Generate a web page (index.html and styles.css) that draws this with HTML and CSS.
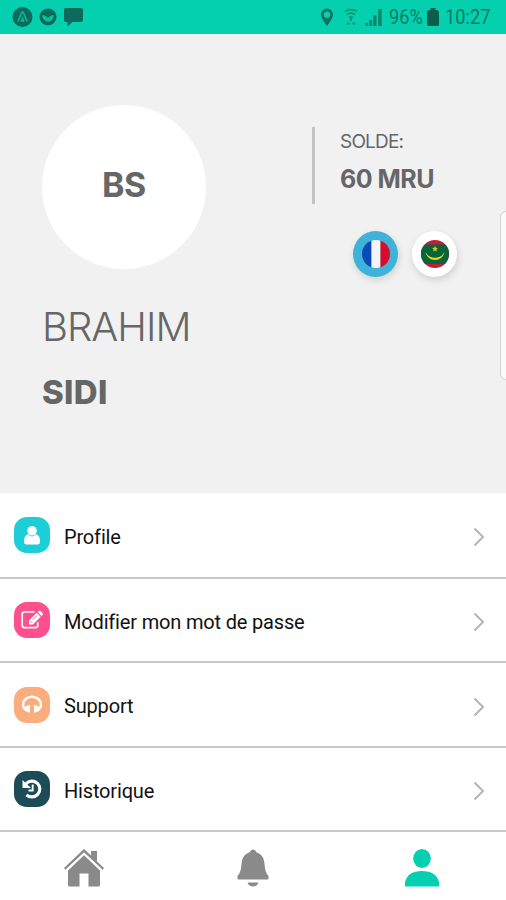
FILE: index.html
```html
<!DOCTYPE html>
<html lang="fr">
<head>
    <meta charset="UTF-8">
    <title>Profile</title>
    <meta name="viewport" content="width=device-width, initial-scale=1.0">
    <link rel="stylesheet" href="styles.css">
</head>
<body>
<div class="app">
    <div class="status-bar">
        <svg class="status-notif" width="72" height="24" viewBox="0 0 72 24">
            <circle cx="10.5" cy="12" r="10" fill="#0c6b5c"/>
            <path d="M6 16.500 9.400 8Q10.500 5.500 11.600 8L15 16.500M9.200 17 10.500 13.500 11.800 17" fill="none" stroke="#08b894" stroke-width="1.700"/>
            <circle cx="36" cy="12" r="8.5" fill="#0c6b5c"/>
            <path d="M30 10.500Q33 9.500 36 13Q39 9.500 42 10.500Q40.500 16.500 36 16.500Q31.500 16.500 30 10.500Z" fill="#06c3a0"/>
            <path d="M54 3h15q2 0 2 2v10q0 2-2 2h-8.500l-5 4.500v-4.500h-1.500q-2 0-2-2v-10q0-2 2-2Z" fill="#0c6b5c"/>
        </svg>
        <svg class="status-signal" width="66" height="24" viewBox="0 0 66 24">
            <path fill-rule="evenodd" d="M7 3.500a6 6 0 0 1 6 6c0 4-6 11.500-6 11.500s-6-7.500-6-11.500a6 6 0 0 1 6-6Zm0 3a3.200 3.200 0 1 0 0 6.400 3.200 3.200 0 0 0 0-6.400Z" fill="#0b7564"/>
            <path d="M25 6.500Q31 2.500 37 6.500M27 9.500Q31 6.800 35 9.500M29 12.500Q31 11 33 12.500M31 13v3" fill="none" stroke="#0b8f78" stroke-width="1.700"/>
            <path d="M27 18.500h2.500M32.500 18.500h2.500" stroke="#0b8f78" stroke-width="2"/>
            <path d="M45.500 18h2.600v3h-2.600zM49.200 15h2.900v6h-2.900zM53.200 10.500h3.300v10.500h-3.300zM58.200 4h3.500v17h-3.500z" fill="#0b8571"/>
        </svg>
        <span class="status-text battery-level">96%</span>
        <svg class="battery" width="12" height="18" viewBox="0 0 12 18">
            <path d="M3.500 0h5v2h1.500l2 1.500v13q0 1.500-1.500 1.500h-9q-1.500 0-1.500-1.500v-13l2-1.500h1.500z" fill="#0c5d4c"/>
        </svg>
        <span class="status-text clock">10:27</span>
    </div>

    <div class="header">
        <div class="user">
            <div class="avatar">BS</div>
            <div class="first-name">BRAHIM</div>
            <div class="last-name">SIDI</div>
        </div>
        <div class="account">
            <div class="balance">
                <div class="balance-label">SOLDE:</div>
                <div class="balance-value">60 MRU</div>
            </div>
            <div class="languages">
                <div class="lang lang-active">
                    <svg width="28" height="28" viewBox="0 0 28 28">
                        <clipPath id="fr"><circle cx="14" cy="14" r="14"/></clipPath>
                        <g clip-path="url(#fr)">
                            <path d="M0 0h9.500v28H0z" fill="#0a4bb5"/>
                            <path d="M9.500 0h9v28h-9z" fill="#f5f5f7"/>
                            <path d="M18.500 0H28v28h-9.500z" fill="#dc0b2b"/>
                        </g>
                    </svg>
                </div>
                <div class="lang">
                    <svg width="28" height="28" viewBox="0 0 28 28">
                        <clipPath id="mr"><circle cx="14" cy="14" r="14"/></clipPath>
                        <g clip-path="url(#mr)">
                            <path d="M0 0h28v28H0z" fill="#c21f37"/>
                            <path d="M0 4.500h28v19.500H0z" fill="#08643a"/>
                            <path d="M4.500 12a9.600 9.200 0 0 0 19 0Q20.500 17.800 14 17.800T4.500 12Z" fill="#e6d91b"/>
                            <path d="m14 6 .9 1.800 2 .3-1.500 1.400.4 2-1.800-.9-1.800.9.400-2-1.500-1.400 2-.3z" fill="#d2cb1c"/>
                        </g>
                    </svg>
                </div>
            </div>
        </div>
        <div class="edge-panel"></div>
    </div>

    <div class="menu">
        <div class="menu-item">
            <div class="menu-icon cyan">
                <svg width="36" height="36" viewBox="0 0 36 36" fill="#fff">
                    <circle cx="18" cy="13.800" r="4.800"/>
                    <path d="M13.600 17.300Q18 21.500 22.400 17.300 26 18.700 26 24.500 26 27.500 23.500 27.500h-11Q10 27.500 10 24.500 10 18.700 13.600 17.300Z"/>
                </svg>
            </div>
            <span class="menu-label">Profile</span>
            <svg class="chevron" width="12" height="20" viewBox="0 0 12 20"><path d="M1.500 1.500 10 10l-8.500 8.500"/></svg>
        </div>
        <div class="menu-item">
            <div class="menu-icon pink">
                <svg width="36" height="36" viewBox="0 0 36 36">
                    <path d="M20.500 10H10.500q-2.300 0-2.300 2.300v11q0 2.300 2.300 2.300h11q2.300 0 2.300-2.300v-3" fill="none" stroke="#fff" stroke-width="1.700"/>
                    <path d="m15 18.500 7.700-7.700 4 4-7.700 7.700h-4zM23.600 9.900l1-1q1-.8 2 .1l1.900 1.900q.8 1 0 2l-1 1z" fill="#fff"/>
                    <path d="m16.500 19.200 1.700 1.700M18.800 17.700l4.300-4.300" stroke="#ff4f8c" stroke-width=".9"/>
                </svg>
            </div>
            <span class="menu-label">Modifier mon mot de passe</span>
            <svg class="chevron" width="12" height="20" viewBox="0 0 12 20"><path d="M1.500 1.500 10 10l-8.500 8.500"/></svg>
        </div>
        <div class="menu-item">
            <div class="menu-icon orange">
                <svg width="36" height="36" viewBox="0 0 36 36">
                    <path d="M11.500 22.500Q9 20.500 9 17.500a9 7.800 0 0 1 18 0Q27 20.500 24.500 22.500" fill="none" stroke="#fff" stroke-width="2.500"/>
                    <path d="M16 18v7.500h-1.500q-1 0-1.500-.8-3-.5-3-2.900t3-2.800q.5-1 1.500-1ZM20 18v7.500h1.500q1 0 1.500-.8 3-.5 3-2.900t-3-2.800q-.5-1-1.500-1Z" fill="#fff"/>
                </svg>
            </div>
            <span class="menu-label">Support</span>
            <svg class="chevron" width="12" height="20" viewBox="0 0 12 20"><path d="M1.500 1.500 10 10l-8.500 8.500"/></svg>
        </div>
        <div class="menu-item">
            <div class="menu-icon dark">
                <svg width="36" height="36" viewBox="0 0 36 36">
                    <path d="M12 12.800a7.900 7.900 0 1 1 .5 11" fill="none" stroke="#fff" stroke-width="3.200"/>
                    <path d="M8.500 9 17 17H8.500z" fill="#fff"/>
                    <path d="M18.700 13.500v6h-4.200" fill="none" stroke="#fff" stroke-width="1.900"/>
                </svg>
            </div>
            <span class="menu-label">Historique</span>
            <svg class="chevron" width="12" height="20" viewBox="0 0 12 20"><path d="M1.500 1.500 10 10l-8.500 8.500"/></svg>
        </div>
    </div>

    <div class="tab-bar">
        <div class="tab">
            <svg width="40" height="38" viewBox="0 0 40 38" fill="#8a8a8a">
                <path d="M20 6.300 36 21.500V36q0 1.500-1.500 1.500H24.500v-13h-9v13H5.500Q4 37.500 4 36V21.500Z"/>
                <path d="M20 0 27 6.500V2h6v10.500l7 6.500-1.300 1.700L20 3.300 1.300 20.700 0 19Z"/>
            </svg>
        </div>
        <div class="tab">
            <svg width="32" height="38" viewBox="0 0 32 38" fill="#8a8a8a">
                <path d="M16 .5q2.500 0 3 2.500 8 2.500 8.500 11.500.3 9 4 12.500v2.500q0 1-1 1h-29q-1 0-1-1V27q3.700-3.500 4-12.500Q5 5.500 13 3q.5-2.500 3-2.500Z"/>
                <path d="M10.500 33.500h11q-1.500 4-5.500 4t-5.500-4Z"/>
            </svg>
        </div>
        <div class="tab">
            <svg width="34" height="38" viewBox="0 0 34 38" fill="#04cfae">
                <ellipse cx="17" cy="9.500" rx="8.800" ry="9.500"/>
                <path d="M0 37.500V33Q3 22 17 22T34 33v4.500Z"/>
            </svg>
        </div>
    </div>
</div>
</body>
</html>
```
FILE: styles.css
```css
body {
    margin: 0px;
    font-family: Roboto, "Liberation Sans", sans-serif;
    background-color: #ffffff;
}
.app {
    width: 506px;
    height: 900px;
    display: flex;
    flex-direction: column;
    overflow: hidden;
}
/* Android status bar */
.status-bar {
    height: 34px;
    flex: none;
    box-sizing: border-box;
    display: flex;
    align-items: center;
    padding: 0px 0px 0px 12px;
    background-color: #04cfae;
}
.status-notif {
    margin-bottom: 1px;
}
.status-signal {
    margin-left: 236px;
}
.status-text {
    flex: none;
    font-size: 21px;
    line-height: 24px;
    color: #0b7a66;
    white-space: nowrap;
    transform: scaleX(0.87);
    transform-origin: left center;
}
.battery-level {
    width: 35px;
    margin-left: 3px;
}
.battery {
    flex: none;
    margin: 0px 6px 0px 3px;
}
/* User header */
.header {
    position: relative;
    height: 459px;
    flex: none;
    box-sizing: border-box;
    display: flex;
    padding: 71px 0px 0px 42px;
    background-color: #f1f1f1;
    color: #666666;
    font-family: Inter, "Liberation Sans", sans-serif;
}
.user {
    width: 270px;
}
.avatar {
    width: 164px;
    height: 164px;
    box-sizing: border-box;
    padding-bottom: 6px;
    display: flex;
    align-items: center;
    justify-content: center;
    border-radius: 50%;
    background-color: #ffffff;
    font-size: 34px;
    font-weight: 700;
    letter-spacing: -0.5px;
}
.first-name {
    margin-top: 33px;
    font-size: 40px;
    font-weight: 300;
    line-height: 50px;
    letter-spacing: -1px;
}
.last-name {
    margin-top: 20px;
    font-size: 33px;
    font-weight: 800;
    line-height: 40px;
    letter-spacing: 0.3px;
}
.balance {
    height: 77px;
    margin-top: 22px;
    box-sizing: border-box;
    padding: 3px 0px 0px 25px;
    border-left: 3px solid #c3c3c3;
}
.balance-label {
    font-size: 19px;
    line-height: 24px;
    letter-spacing: -0.8px;
}
.balance-value {
    margin-top: 10px;
    font-size: 25px;
    font-weight: 700;
    line-height: 30px;
    letter-spacing: -0.5px;
}
.languages {
    display: flex;
    gap: 14px;
    margin: 27px 0px 0px 41px;
}
.lang {
    width: 45px;
    height: 46px;
    display: flex;
    align-items: center;
    justify-content: center;
    border-radius: 50%;
    background-color: #ffffff;
    box-shadow: 1px 3px 7px rgba(0, 0, 0, 0.14);
}
.lang-active {
    background-color: #3fb2d8;
}
/* Handle that sticks out of the right edge */
.edge-panel {
    position: absolute;
    top: 177px;
    right: -10px;
    width: 16px;
    height: 169px;
    box-sizing: border-box;
    border: 1px solid #d2d2d2;
    border-radius: 6px;
    background-color: #fafafa;
}
/* Menu */
.menu {
    display: grid;
    grid-template-rows: 86px 84px 85px 84px;
}
.menu-item {
    display: flex;
    align-items: center;
    padding: 0px 21px 0px 14px;
    border-bottom: 2px solid #c8c8c8;
}
.menu-icon {
    width: 36px;
    height: 36px;
    border-radius: 13px;
}
.menu-icon svg {
    display: block;
}
.cyan {
    background-color: #1dced8;
}
.pink {
    background-color: #ff4f8c;
}
.orange {
    background-color: #fcad7e;
}
.dark {
    background-color: #1b4c57;
}
.menu-label {
    flex: 1;
    margin-left: 14px;
    padding-top: 3px;
    font-size: 20px;
    letter-spacing: -0.17px;
    color: #111111;
}
.chevron {
    margin-top: 4px;
    fill: none;
    stroke: #b4b4b4;
    stroke-width: 2;
}
/* Bottom tabs */
.tab-bar {
    flex: 1;
    display: grid;
    grid-template-columns: repeat(3, 1fr);
}
.tab {
    display: flex;
    justify-content: center;
    padding-top: 17px;
}
```
